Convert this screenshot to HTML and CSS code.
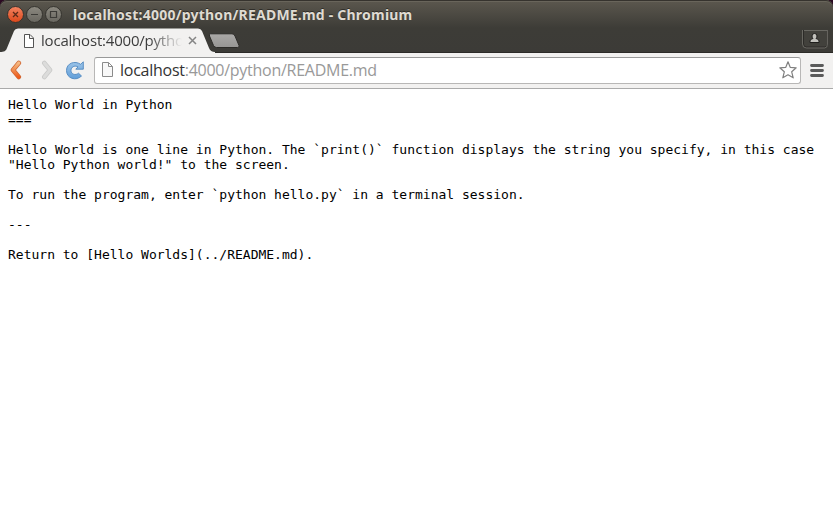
FILE: index.html
```html
<!DOCTYPE html>
<html lang="en">
<head>
<meta charset="utf-8">
<title>localhost:4000/python/README.md</title>
<link rel="stylesheet" href="styles.css">
</head>
<body>
<div class="window">
  <header class="frame">
    <div class="titlebar">
      <svg class="controls" width="58" height="20" viewBox="0 0 58 20">
        <defs>
          <linearGradient id="close" x1="0" y1="0" x2="0" y2="1"><stop offset="0" stop-color="#f48462"/><stop offset="1" stop-color="#dc4719"/></linearGradient>
          <linearGradient id="grey" x1="0" y1="0" x2="0" y2="1"><stop offset="0" stop-color="#8d8a81"/><stop offset="1" stop-color="#68665f"/></linearGradient>
        </defs>
        <g stroke="#35332e">
          <circle cx="9.500" cy="9.500" r="8" fill="url(#close)"/>
          <circle cx="28.500" cy="9.500" r="8" fill="url(#grey)"/>
          <circle cx="47.500" cy="9.500" r="8" fill="url(#grey)"/>
        </g>
        <path d="M7 7l5 5m0-5l-5 5" stroke="#5c2a18" stroke-width="1.300"/>
        <path d="M25 9.500h7M44.500 6.500h6v6h-6z" fill="none" stroke="#3c3b37" stroke-width="1.200"/>
      </svg>
      <h1 class="title">localhost:4000/python/README.md - Chromium</h1>
    </div>
    <div class="tabstrip">
      <div class="tab">
        <svg class="tab-shape" width="216" height="25" viewBox="0 0 216 25">
          <path d="M0 25V24C4 24 6 23 7 20L14 3Q15 .5 18 .5H198Q201 .5 202 3L209 20Q210.500 24 215 24V25Z" fill="#f2f1f0"/>
        </svg>
        <svg class="page-icon" width="12" height="14" viewBox="0 0 12 14"><path d="M1.500.5h5.500l3.500 3.500v9.500h-9zM6.500.5v4h4" fill="#fff" stroke="#555"/></svg>
        <span class="tab-title">localhost:4000/pytho</span>
        <svg class="tab-close" width="9" height="9" viewBox="0 0 9 9"><path d="M1 1l7 7m0-7l-7 7" stroke="#858585" stroke-width="1.500"/></svg>
      </div>
      <svg class="new-tab" width="33" height="16" viewBox="0 0 33 16">
        <defs><linearGradient id="nt" x1="0" y1="0" x2="0" y2="1"><stop offset="0" stop-color="#aaa9a7"/><stop offset="1" stop-color="#969593"/></linearGradient></defs>
        <path d="M2.500.8H24Q26 .8 27 3l4 9.500q.8 2-1.500 2H8.500q-2 0-3-2L1.500 3Q.8.8 2.500.8z" fill="url(#nt)" stroke="#2c2b28"/>
      </svg>
      <svg class="profile" width="27" height="19" viewBox="0 0 27 19">
        <path d="M1.500 0v14q0 3 3 3h18q3 0 3-3V0" fill="#42413c" stroke="#2c2b28"/>
        <path d="M.5 0v14q0 4 4 4h18q3 0 3-4V0M2 .5h23" fill="none" stroke="#74726c" stroke-width=".8"/>
        <path d="M8 12.500v-1.500q0-2 3-2.500Q10 7.500 10 6q0-2.500 2.500-2.500T15 6q0 1.500-1 2.500 3 .5 3 2.500v1.500z" fill="#c2c1bc" stroke="#1f1e1c"/>
      </svg>
    </div>
  </header>
  <nav class="toolbar">
    <svg class="back" width="14" height="20" viewBox="0 0 14 20">
      <defs><linearGradient id="bk" x1="0" y1="0" x2="0" y2="1"><stop offset="0" stop-color="#f6b982"/><stop offset=".5" stop-color="#f08d50"/><stop offset="1" stop-color="#ee5a1b"/></linearGradient></defs>
      <path d="M9.800 3L4 10l5.800 7" fill="none" stroke="#cf6632" stroke-width="4.600" stroke-linecap="round" stroke-linejoin="round"/>
      <path d="M9.800 3L4 10l5.800 7" fill="none" stroke="url(#bk)" stroke-width="3.200" stroke-linecap="round" stroke-linejoin="round"/>
    </svg>
    <svg class="forward" width="14" height="20" viewBox="0 0 14 20">
      <path d="M4.300 3L10 10l-5.700 7" fill="none" stroke="#cacac9" stroke-width="4.600" stroke-linecap="round" stroke-linejoin="round"/>
      <path d="M4.300 3L10 10l-5.700 7" fill="none" stroke="#dcdcdb" stroke-width="3" stroke-linecap="round" stroke-linejoin="round"/>
    </svg>
    <svg class="reload" width="20" height="20" viewBox="0 0 20 20">
      <defs><linearGradient id="rl" x1="0" y1="0" x2="0" y2="1"><stop offset="0" stop-color="#9cc4e8"/><stop offset="1" stop-color="#629fd9"/></linearGradient></defs>
      <path d="M18.300 1.800v7.400H10.800l2.200-2.300C9.500 5 6 7 6 10.500c0 3.700 4.500 5.300 7.500 2.700l3 2.800C11 21.500 1.500 18.500 1.500 10.500 1.500 3 10 .3 15.600 4.300z" fill="url(#rl)" stroke="#5088c0" stroke-width=".9" stroke-linejoin="round"/>
    </svg>
    <div class="omnibox">
      <svg class="url-icon" width="13" height="16" viewBox="0 0 13 16"><path d="M1.500.5h6l4 4v10h-10zM7.500.5v4h4" fill="#f8f8f8" stroke="#8b8b8b"/></svg>
      <span class="url"><span class="host">localhost</span>:4000/python/README.md</span>
      <svg class="star" width="20" height="20" viewBox="0 0 20 20"><path d="M10 1.800l2.200 5.500 6 .5-4.500 4 1.500 6L10 14.800l-5.200 3 1.500-6-4.500-4 6-.5z" fill="#fff" stroke="#808080" stroke-width="1.200" stroke-linejoin="round"/></svg>
    </div>
    <svg class="menu" width="14" height="14" viewBox="0 0 14 14"><path d="M1.500 2.500h11M1.500 7.500h11M1.500 12.500h11" stroke="#5a5a5a" stroke-width="2.800" stroke-linecap="round"/></svg>
  </nav>
  <main class="page">
<pre>Hello World in Python
===

Hello World is one line in Python. The `print()` function displays the string you specify, in this case
"Hello Python world!" to the screen.

To run the program, enter `python hello.py` in a terminal session.

---

Return to [Hello Worlds](../README.md).</pre>
  </main>
</div>
</body>
</html>
```
FILE: styles.css
```css
* { box-sizing: border-box; }
body { margin: 0; background: #2b0a22; overflow: hidden; font-family: "Open Sans", "Noto Sans", sans-serif; }
svg { display: block; flex: none; }
.window { height: 521px; display: flex; flex-direction: column; }
.frame {
  height: 53px;
  flex: none;
  border-radius: 7px 7px 0 0;
  background: linear-gradient(#5a564d 0, #5a564d 2px, #3d3c37 28px, #3c3b37 100%);
  box-shadow: inset 0 1px #36332e, inset 0 2px #69655b, inset 0 -1px #2c2b28;
}
.titlebar { height: 28px; display: flex; align-items: center; padding-left: 6px; }
.controls { margin-top: 1px; }
.title {
  margin: 0 0 0 9px;
  color: #dfdbd2;
  font: bold 14px/20px "Noto Sans", sans-serif;
  letter-spacing: 0.215px;
  white-space: nowrap;
  text-shadow: 0 -1px #302e29;
  padding-top: 1px;
}
.tabstrip { display: flex; height: 25px; align-items: flex-start; }
.tab { position: relative; width: 208px; height: 25px; display: flex; align-items: center; padding-left: 23px; }
.tab-shape { position: absolute; left: 0; top: 0; }
.page-icon, .tab-title, .tab-close { position: relative; }
.tab-title {
  width: 141px;
  margin-left: 6px;
  white-space: nowrap;
  color: #3c3c3c;
  font-size: 15px;
  letter-spacing: -0.2px;
  line-height: 22px;
  margin-top: -1px;
  -webkit-mask-image: linear-gradient(90deg, #000 108px, transparent 141px);
  mask-image: linear-gradient(90deg, #000 108px, transparent 141px);
}
.tab-close { margin-left: 6px; }
.new-tab { margin-top: 5px; }
.profile { margin: 2px 4px 0 auto; }
.toolbar {
  height: 36px;
  flex: none;
  display: flex;
  align-items: center;
  padding: 0 9px 1px 9px;
  background: #f2f1f0;
  border-bottom: 1px solid #aaa;
}
.forward { margin-left: 17px; }
.reload { margin-left: 11px; }
.omnibox {
  flex: 1;
  height: 27px;
  display: flex;
  align-items: center;
  margin-left: 9px;
  padding: 0 2px 0 6px;
  border: 1px solid #b8b7b6;
  border-top-color: #999;
  border-radius: 3px;
  background: #fff;
}
.url { margin-left: 6px; color: #999; font-size: 16px; letter-spacing: -0.26px; line-height: 22px; white-space: nowrap; }
.host { color: #333; }
.star { margin-left: auto; }
.menu { margin-left: 9px; }
.page { flex: 1; background: #fff; padding: 8px; }
pre { margin: 0; color: #000; font: 13px/15px "DejaVu Sans Mono", monospace; }
```
